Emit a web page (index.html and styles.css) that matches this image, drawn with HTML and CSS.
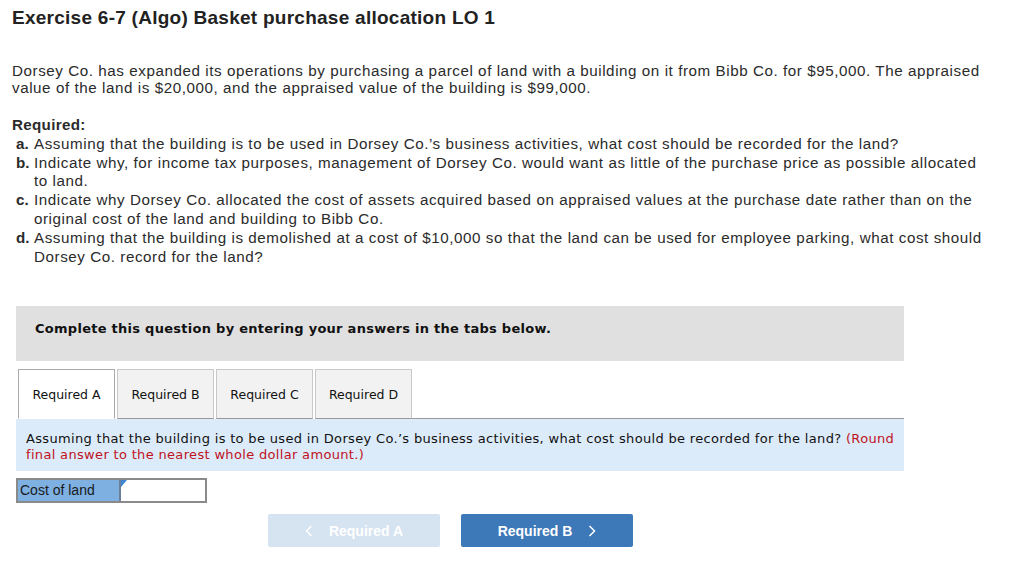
FILE: index.html
```html
<!DOCTYPE html>
<html>
<head>
<meta charset="utf-8">
<link rel="stylesheet" href="styles.css">
</head>
<body>
<div class="page">
  <h1 class="title">Exercise 6-7 (Algo) Basket purchase allocation LO 1</h1>
  <p class="intro">Dorsey Co. has expanded its operations by purchasing a parcel of land with a building on it from Bibb Co. for $95,000. The appraised<br>value of the land is $20,000, and the appraised value of the building is $99,000.</p>
  <div class="required">
    <div class="req-head">Required:</div>
    <div class="item"><span class="mark">a.</span><span class="txt">Assuming that the building is to be used in Dorsey Co.’s business activities, what cost should be recorded for the land?</span></div>
    <div class="item"><span class="mark">b.</span><span class="txt">Indicate why, for income tax purposes, management of Dorsey Co. would want as little of the purchase price as possible allocated<br>to land.</span></div>
    <div class="item"><span class="mark">c.</span><span class="txt">Indicate why Dorsey Co. allocated the cost of assets acquired based on appraised values at the purchase date rather than on the<br>original cost of the land and building to Bibb Co.</span></div>
    <div class="item"><span class="mark">d.</span><span class="txt">Assuming that the building is demolished at a cost of $10,000 so that the land can be used for employee parking, what cost should<br>Dorsey Co. record for the land?</span></div>
  </div>

  <div class="panel">
    <div class="instruct">Complete this question by entering your answers in the tabs below.</div>
    <div class="tabs">
      <div class="tab active">Required A</div>
      <div class="tab">Required B</div>
      <div class="tab">Required C</div>
      <div class="tab">Required D</div>
      <div class="tab-fill"></div>
    </div>
    <div class="question">Assuming that the building is to be used in Dorsey Co.’s business activities, what cost should be recorded for the land? <span class="red">(Round<br>final answer to the nearest whole dollar amount.)</span></div>
    <div class="answer">
      <div class="ans-label">Cost of land</div>
      <div class="ans-input"><span class="flag"></span></div>
    </div>
    <div class="nav">
      <div class="btn prev"><svg class="chev" width="8" height="12" viewBox="0 0 8 12"><path d="M6.5 1 L1.5 6 L6.5 11" fill="none" stroke="#fff" stroke-width="1.5"/></svg>Required A</div>
      <div class="btn next">Required B<svg class="chev" width="8" height="12" viewBox="0 0 8 12"><path d="M1.5 1 L6.5 6 L1.5 11" fill="none" stroke="#fff" stroke-width="1.5"/></svg></div>
    </div>
  </div>
</div>
</body>
</html>
```
FILE: styles.css
```css
html, body {
  margin: 0;
  padding: 0;
  background: #fff;
}
.page {
  padding: 0 0 0 12px;
  font-family: "Liberation Sans", Arial, sans-serif;
  color: #2b2b2b;
}
.title {
  margin: 0;
  padding-top: 6px;
  font-size: 19px;
  line-height: 24px;
  font-weight: 700;
  letter-spacing: 0.26px;
  color: #222;
}
.intro {
  margin: 32px 0 0 0;
  font-size: 15.2px;
  line-height: 17px;
  letter-spacing: 0.56px;
  white-space: nowrap;
}
.required {
  margin-top: 20px;
  font-size: 15.2px;
  line-height: 18.8px;
  letter-spacing: 0.56px;
  white-space: nowrap;
}
.req-head {
  font-weight: 700;
  letter-spacing: 0.3px;
}
.item {
  display: flex;
  padding-left: 4px;
}
.mark {
  width: 18px;
  font-weight: 700;
  letter-spacing: 0;
  flex: none;
}
.panel {
  margin-top: 40px;
  margin-left: 4px;
  width: 888px;
  font-family: "DejaVu Sans", Verdana, sans-serif;
}
.instruct {
  background: #e0e0e0;
  height: 55px;
  box-sizing: border-box;
  padding: 15px 0 0 19px;
  font-size: 13px;
  line-height: 16px;
  font-weight: 700;
  letter-spacing: 0.27px;
  color: #111;
}
.tabs {
  margin-top: 8px;
  display: flex;
  gap: 2px;
  padding-left: 2px;
  height: 50px;
}
.tab {
  width: 95px;
  border: 1px solid #c8c8c8;
  border-bottom: 1px solid #999;
  background: #f2f2f2;
  display: flex;
  align-items: center;
  justify-content: center;
  font-size: 12.5px;
  color: #111;
  box-sizing: content-box;
  height: 48px;
}
.tab.active {
  background: #fff;
  border-color: #aaa;
  border-bottom-color: #fff;
}
.tab-fill {
  flex: 1;
  border-bottom: 1px solid #999;
  margin-left: -2px;
}
.question {
  background: #dcebf9;
  height: 52px;
  box-sizing: border-box;
  padding: 12px 10px 0 10px;
  font-size: 13px;
  letter-spacing: 0.33px;
  line-height: 16px;
  white-space: nowrap;
  color: #111;
}
.red {
  color: #c0121e;
}
.answer {
  margin-top: 7px;
  display: flex;
  width: 191px;
  height: 25px;
  box-sizing: border-box;
  border: 2px solid #8a8a8a;
  font-family: "Liberation Sans", Arial, sans-serif;
}
.ans-label {
  width: 103px;
  background: #7eb0e2;
  border-right: 2px solid #6a7f99;
  font-size: 14px;
  line-height: 21px;
  padding-left: 2px;
  color: #1a1a1a;
  box-sizing: border-box;
}
.ans-input {
  flex: 1;
  background: #fff;
  position: relative;
}
.flag {
  position: absolute;
  left: 0;
  top: 0;
  width: 0;
  height: 0;
  border-top: 7px solid #3f85d0;
  border-right: 6px solid transparent;
}
.nav {
  margin-top: 11px;
  display: flex;
  gap: 21px;
  padding-left: 252px;
}
.btn {
  width: 172px;
  height: 33px;
  border-radius: 2px;
  display: flex;
  align-items: center;
  justify-content: center;
  font-family: "Liberation Sans", Arial, sans-serif;
  font-weight: 700;
  font-size: 14px;
  color: #fff;
}
.btn.prev {
  background: #d6e3f1;
}
.btn.next {
  background: #3d78b8;
}
.prev .chev {
  margin-right: 16px;
}
.next .chev {
  margin-left: 16px;
}
```
